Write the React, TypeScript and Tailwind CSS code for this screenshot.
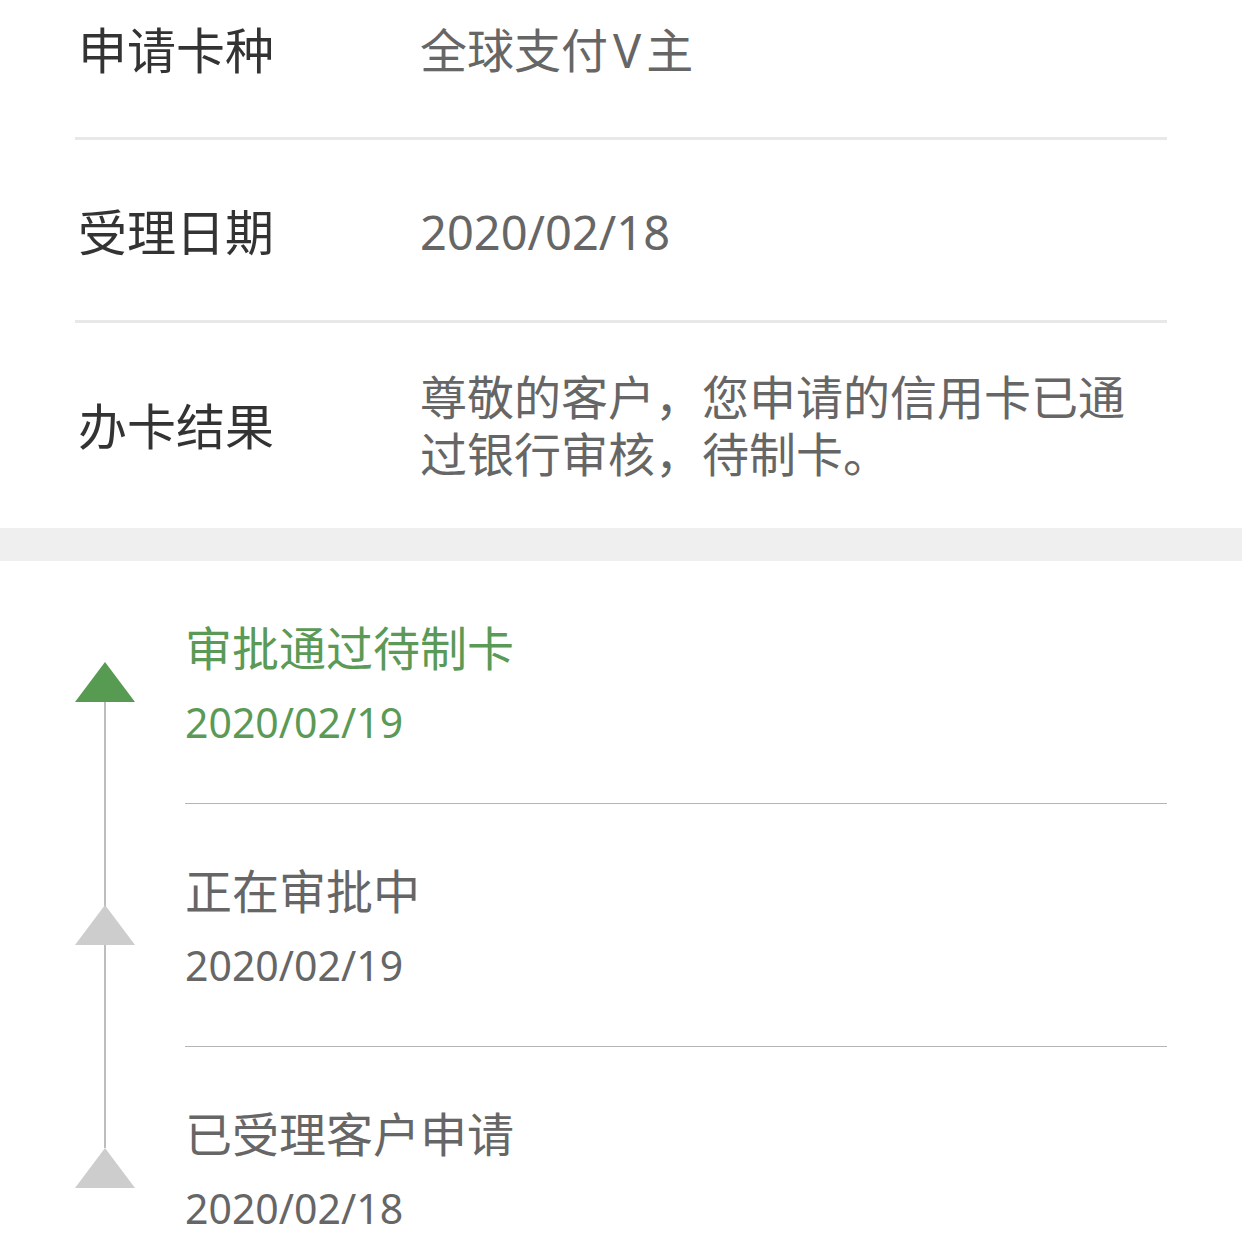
import React from 'react';

const font = { fontFamily: '"Noto Sans", "Noto Sans CJK SC", sans-serif' };

interface Step {
    title: string;
    date: string;
    active: boolean;
}

const steps: Step[] = [
    { title: '审批通过待制卡', date: '2020/02/19', active: true },
    { title: '正在审批中', date: '2020/02/19', active: false },
    { title: '已受理客户申请', date: '2020/02/18', active: false }
];

const Triangle: React.FC<{ color: string }> = ({ color }) => (
    <svg width="60" height="40" viewBox="0 0 60 40" className="block">
        <polygon points="30,0 60,40 0,40" fill={color} />
    </svg>
);

const App: React.FC = () => {
    return (
        <div className="w-[1242px] h-[1242px] bg-white overflow-hidden" style={font}>
            <div className="px-[75px]">
                <div className="flex items-start h-[140px] pt-[20px] border-b-[3px] border-[#e8e8e8]">
                    <div className="w-[345px] pl-[3px] text-[49px] leading-[60px] text-[#333]">申请卡种</div>
                    <div className="flex-1 text-[47px] leading-[60px] text-[#666]">
                        全球支付<span className="mx-[5px]">V</span>主
                    </div>
                </div>
                <div className="flex items-center h-[183px] pt-[4px] border-b-[3px] border-[#e8e8e8]">
                    <div className="w-[345px] pl-[3px] text-[49px] leading-[60px] text-[#333]">受理日期</div>
                    <div className="flex-1 text-[47px] leading-[60px] text-[#666]">2020/02/18</div>
                </div>
                <div className="flex items-center h-[205px]">
                    <div className="w-[345px] pl-[3px] text-[49px] leading-[60px] text-[#333]">办卡结果</div>
                    <div className="flex-1 text-[47px] leading-[57px] text-[#666]">
                        尊敬的客户，您申请的信用卡已通过银行审核，待制卡。
                    </div>
                </div>
            </div>

            <div className="h-[33px] bg-[#efefef]" />

            <div className="px-[75px]">
                {steps.map((step, i) => (
                    <div key={i} className="flex h-[243px]">
                        <div className="relative w-[110px] shrink-0">
                            {i === 0 && <div className="absolute left-[29px] top-[141px] bottom-0 w-[2px] bg-[#bdbdbd]" />}
                            {i === 1 && <div className="absolute left-[29px] top-0 bottom-0 w-[2px] bg-[#bdbdbd]" />}
                            {i === 2 && <div className="absolute left-[29px] top-0 h-[101px] w-[2px] bg-[#bdbdbd]" />}
                            <div className="relative mt-[101px]">
                                <Triangle color={step.active ? '#579a51' : '#cdcdcd'} />
                            </div>
                        </div>
                        <div className={`flex-1 pt-[57px] ${i < 2 ? 'border-b border-[#b5b5b5]' : ''}`}>
                            <div className={`text-[47px] leading-[60px] ${step.active ? 'text-[#5b9a56]' : 'text-[#666]'}`}>
                                {step.title}
                            </div>
                            <div className={`mt-[14px] text-[41px] leading-[60px] ${step.active ? 'text-[#5b9a56]' : 'text-[#666]'}`}>
                                {step.date}
                            </div>
                        </div>
                    </div>
                ))}
            </div>
        </div>
    );
};

export default App;
